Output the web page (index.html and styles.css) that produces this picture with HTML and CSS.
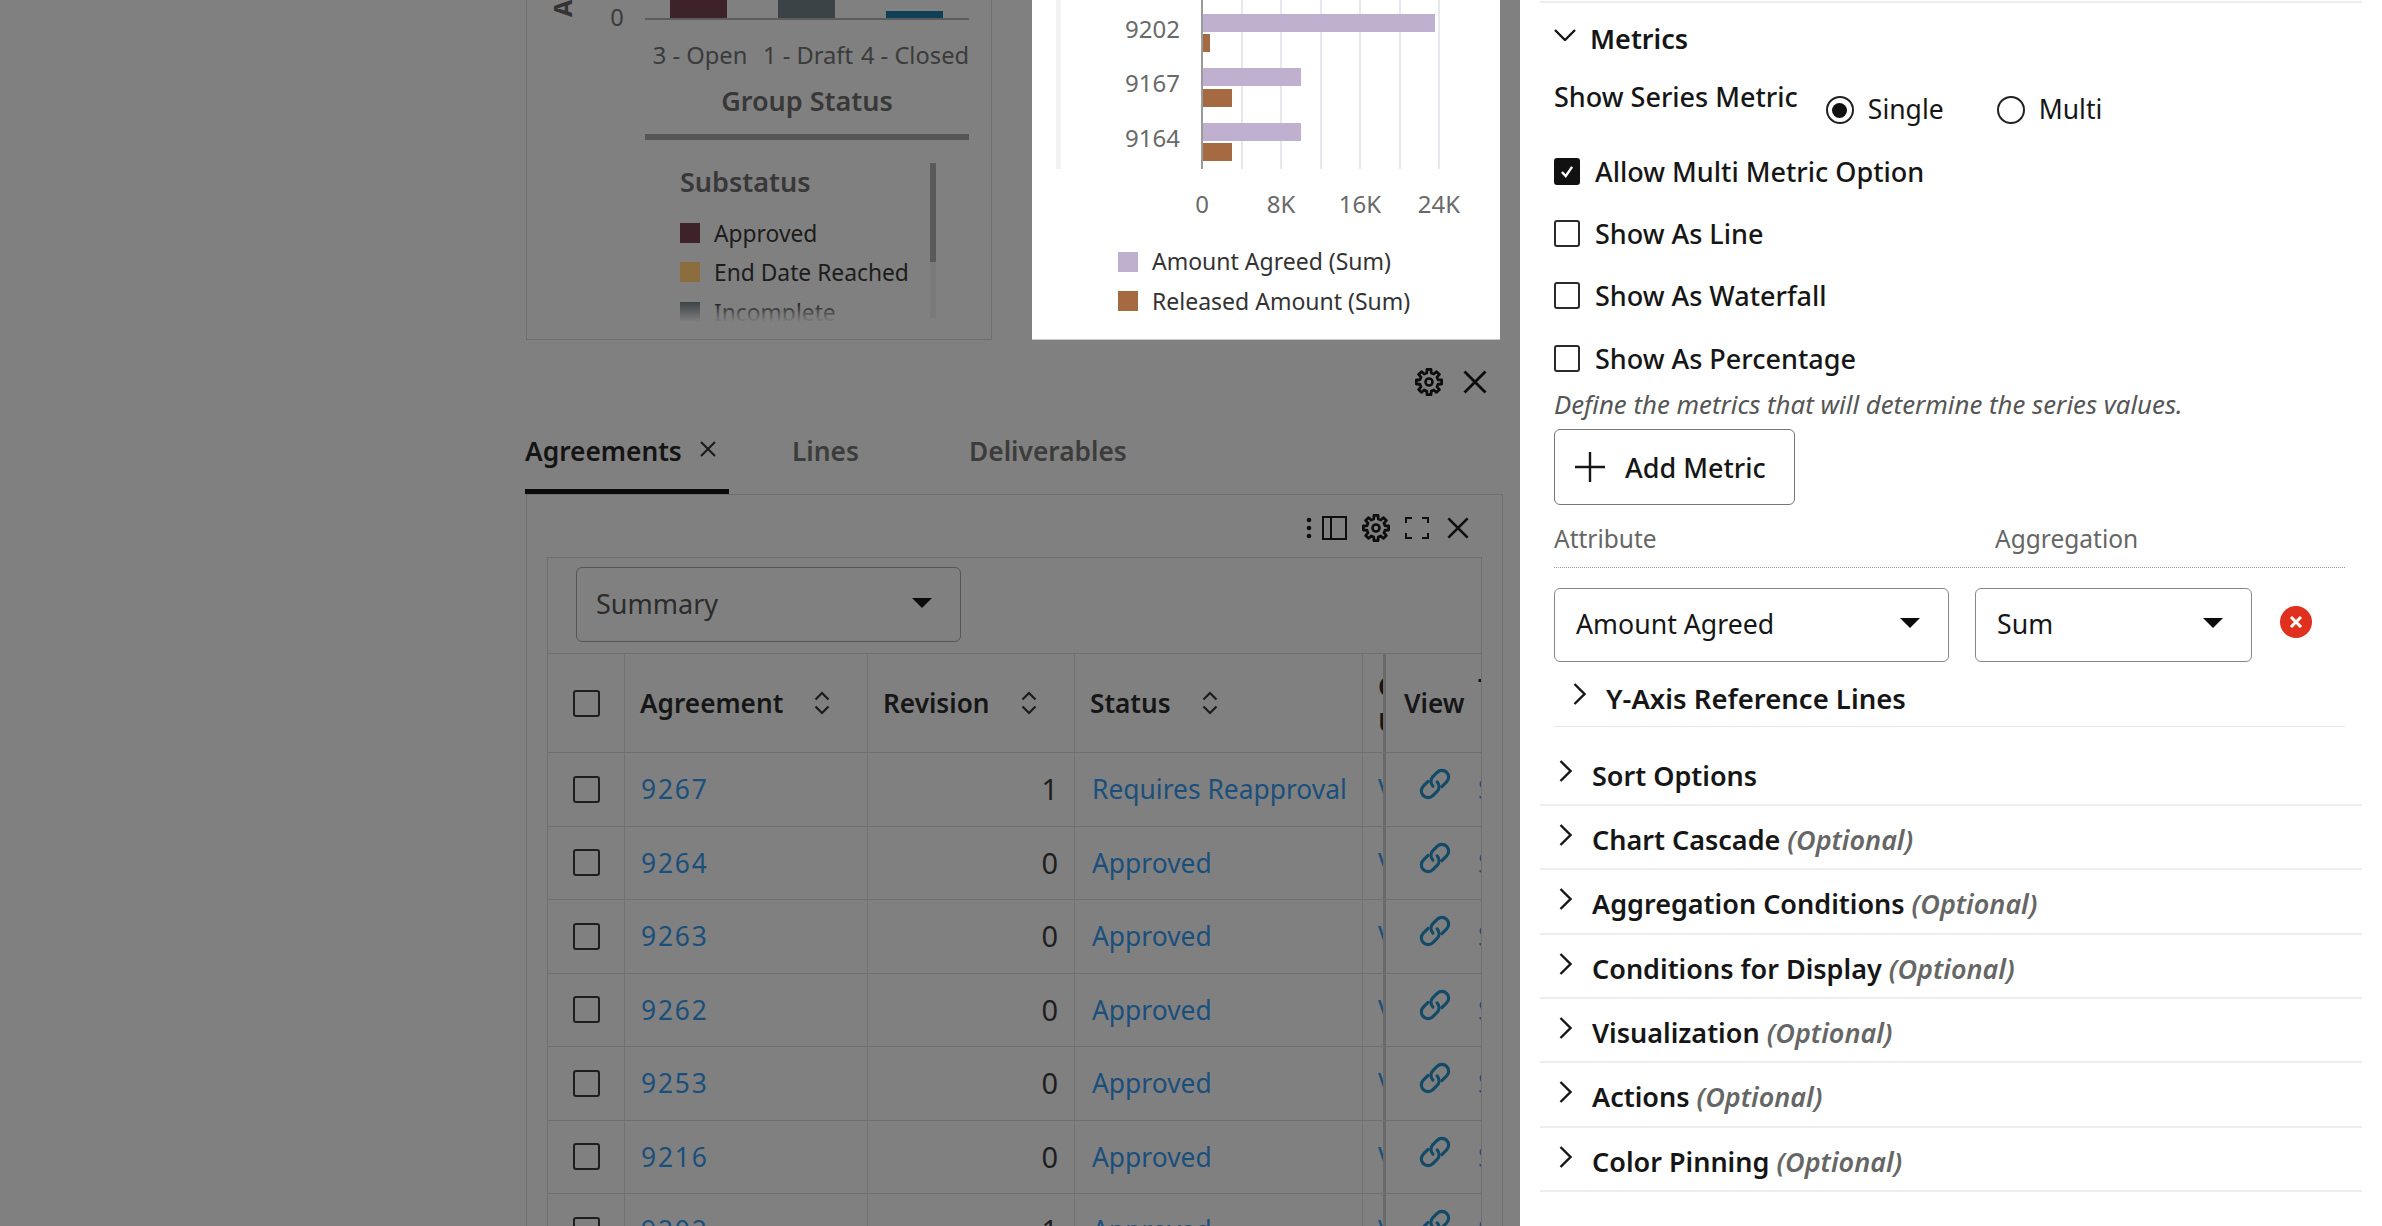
FILE: index.html
```html
<!DOCTYPE html>
<html lang="en">
<head>
<meta charset="utf-8">
<title>Chart settings</title>
<link rel="stylesheet" href="styles.css">
</head>
<body>
<svg class="defs" width="0" height="0" aria-hidden="true">
  <defs>
    <symbol id="gear" viewBox="0 0 24 24"><path fill="none" stroke="currentColor" stroke-width="2.400" stroke-linejoin="round" d="M10.060 4.240L10.280 1.140H13.720L13.940 4.240L16.120 5.140L18.470 3.100L20.900 5.530L18.860 7.880L19.760 10.060L22.860 10.280V13.720L19.760 13.940L18.860 16.120L20.900 18.470L18.470 20.900L16.120 18.860L13.940 19.760L13.720 22.860H10.280L10.060 19.760L7.880 18.860L5.530 20.900L3.100 18.470L5.140 16.120L4.240 13.940L1.140 13.720V10.280L4.240 10.060L5.140 7.880L3.100 5.530L5.530 3.100L7.880 5.140Z"/><circle cx="12" cy="12" r="3" fill="none" stroke="currentColor" stroke-width="2.200"/></symbol>
    <symbol id="close" viewBox="0 0 24 24"><path fill="none" stroke="currentColor" stroke-width="2.800" d="M1.500 1.500L22.500 22.500M22.500 1.500L1.500 22.500"/></symbol>
    <symbol id="sort" viewBox="0 0 16 24"><path fill="none" stroke="currentColor" stroke-width="2.200" d="M1.500 8.500L8 2L14.500 8.500M1.500 15.500L8 22L14.500 15.500"/></symbol>
    <symbol id="link" viewBox="0 0 24 24"><g transform="rotate(-45 12 12)" fill="none" stroke="currentColor" stroke-width="2.100" stroke-linecap="round"><path d="M10 7.500H5.500a4.500 4.500 0 0 0 0 9H9.500a4.500 4.500 0 0 0 4.500-4.500"/><path d="M14 16.500h4.500a4.500 4.500 0 0 0 0-9H14.500a4.500 4.500 0 0 0-4.500 4.500"/></g></symbol>
    <symbol id="right" viewBox="0 0 13 22"><path fill="none" stroke="currentColor" stroke-width="2.400" d="M1.500 1L11.500 11L1.500 21"/></symbol>
    <linearGradient id="fadeDark" gradientUnits="userSpaceOnUse" x1="0" y1="302" x2="0" y2="322"><stop offset="0" stop-color="#3c4347"/><stop offset="1" stop-color="#3c4347" stop-opacity="0"/></linearGradient>
    <linearGradient id="fadeText" gradientUnits="userSpaceOnUse" x1="0" y1="302" x2="0" y2="322"><stop offset="0" stop-color="#1c1c1c"/><stop offset="1" stop-color="#1c1c1c" stop-opacity="0"/></linearGradient>
  </defs>
</svg>
<div class="page">
  <main class="main">
    <section class="charts">
      <div class="chart-card">
        <svg class="chart" viewBox="526 0 466 339" role="img" aria-label="Group status chart">
          <text class="axis-title" transform="translate(572 17) rotate(-90)">Amount</text>
          <text class="tick" x="617" y="26" text-anchor="middle">0</text>
          <rect x="670" y="-4" width="57" height="22" fill="#3d2329"/>
          <rect x="778" y="-4" width="57" height="22" fill="#3c4347"/>
          <rect x="886" y="11" width="57" height="7" fill="#123f58"/>
          <rect x="645" y="18" width="324" height="2" fill="#5c5c5c"/>
          <text class="tick" x="700" y="64" text-anchor="middle">3 - Open</text>
          <text class="tick" x="808" y="64" text-anchor="middle">1 - Draft</text>
          <text class="tick" x="915" y="64" text-anchor="middle">4 - Closed</text>
          <text class="chart-head" x="807" y="111" text-anchor="middle">Group Status</text>
          <rect x="645" y="134" width="324" height="6" fill="#565656"/>
          <text class="chart-head" x="680" y="192">Substatus</text>
          <rect x="930" y="163" width="6" height="99" fill="#5a5a5a"/>
          <rect x="930" y="262" width="6" height="56" fill="#7a7a7a"/>
          <rect x="680" y="223" width="20" height="20" fill="#3d2329"/>
          <text class="legend" x="714" y="242">Approved</text>
          <rect x="680" y="262" width="20" height="20" fill="#8c6d3f"/>
          <text class="legend" x="714" y="281">End Date Reached</text>
          <rect x="680" y="302" width="20" height="20" fill="url(#fadeDark)"/>
          <text class="legend legend-fade" x="714" y="321">Incomplete</text>
        </svg>
      </div>
      <div class="chart-white">
        <svg class="chart" viewBox="1032 0 468 339" role="img" aria-label="Amount agreed and released amount by agreement">
          <rect x="1056" y="0" width="5" height="169" fill="#f3f3f3"/>
          <g fill="#e7e8ef">
            <rect x="1241" y="0" width="2" height="169"/><rect x="1280" y="0" width="2" height="169"/><rect x="1320" y="0" width="2" height="169"/><rect x="1359" y="0" width="2" height="169"/><rect x="1399" y="0" width="2" height="169"/><rect x="1438" y="0" width="2" height="169"/>
          </g>
          <rect x="1203" y="14" width="232" height="18" fill="#bfb0d0"/>
          <rect x="1203" y="34" width="7" height="18" fill="#a56a42"/>
          <rect x="1203" y="68" width="98" height="18" fill="#bfb0d0"/>
          <rect x="1203" y="89" width="29" height="18" fill="#a56a42"/>
          <rect x="1203" y="123" width="98" height="18" fill="#bfb0d0"/>
          <rect x="1203" y="143" width="29" height="18" fill="#a56a42"/>
          <rect x="1201" y="0" width="2" height="169" fill="#9a9a9a"/>
          <text class="tick2" x="1180" y="38" text-anchor="end">9202</text>
          <text class="tick2" x="1180" y="92" text-anchor="end">9167</text>
          <text class="tick2" x="1180" y="147" text-anchor="end">9164</text>
          <text class="tick2" x="1202" y="213" text-anchor="middle">0</text>
          <text class="tick2" x="1281" y="213" text-anchor="middle">8K</text>
          <text class="tick2" x="1360" y="213" text-anchor="middle">16K</text>
          <text class="tick2" x="1439" y="213" text-anchor="middle">24K</text>
          <rect x="1118" y="252" width="20" height="20" fill="#bfb0d0"/>
          <text class="legend2" x="1152" y="270">Amount Agreed (Sum)</text>
          <rect x="1118" y="291" width="20" height="20" fill="#a56a42"/>
          <text class="legend2" x="1152" y="310">Released Amount (Sum)</text>
        </svg>
      </div>
    </section>
    <div class="grid-actions">
      <svg class="ic-gear"><use href="#gear"/></svg>
      <svg class="ic-close"><use href="#close"/></svg>
    </div>
    <nav class="tabs">
      <div class="tab active">Agreements<svg class="tab-x"><use href="#close"/></svg></div>
      <div class="tab tab-lines">Lines</div>
      <div class="tab tab-deliv">Deliverables</div>
    </nav>
    <section class="panel">
      <div class="toolbar">
        <svg class="tb-dots" viewBox="0 0 6 22"><circle cx="3" cy="3" r="2.300"/><circle cx="3" cy="11" r="2.300"/><circle cx="3" cy="19" r="2.300"/></svg>
        <svg class="tb-split" viewBox="0 0 25 24"><path fill="none" stroke="currentColor" stroke-width="2" d="M1 1H24V23H1ZM9 1V23"/></svg>
        <svg class="ic-gear"><use href="#gear"/></svg>
        <svg class="tb-expand" viewBox="0 0 24 22"><path fill="none" stroke="currentColor" stroke-width="2" d="M1 6V1H7M17 1H23V6M23 16V21H17M7 21H1V16"/></svg>
        <svg class="ic-close"><use href="#close"/></svg>
      </div>
      <div class="box">
        <div class="select-row"><div class="select select-summary"><span>Summary</span><i class="caret"></i></div></div>
        <div class="tr thead">
          <div class="td c-check"><i class="cb"></i></div>
          <div class="td c-agr">Agreement<svg class="sort"><use href="#sort"/></svg></div>
          <div class="td c-rev">Revision<svg class="sort"><use href="#sort"/></svg></div>
          <div class="td c-status">Status<svg class="sort"><use href="#sort"/></svg></div>
          <div class="td c-cut">C<br>U</div>
          <div class="td c-view">View</div>
          <div class="td c-edge"><span class="edge-head">T</span></div>
        </div>
        <div class="tr"><div class="td c-check"><i class="cb"></i></div><div class="td c-agr lnk">9267</div><div class="td c-rev num">1</div><div class="td c-status lnk">Requires Reapproval</div><div class="td c-cut lnk">V</div><div class="td c-view"><svg class="link"><use href="#link"/></svg></div><div class="td c-edge lnk">S</div></div>
        <div class="tr"><div class="td c-check"><i class="cb"></i></div><div class="td c-agr lnk">9264</div><div class="td c-rev num">0</div><div class="td c-status lnk">Approved</div><div class="td c-cut lnk">V</div><div class="td c-view"><svg class="link"><use href="#link"/></svg></div><div class="td c-edge lnk">S</div></div>
        <div class="tr"><div class="td c-check"><i class="cb"></i></div><div class="td c-agr lnk">9263</div><div class="td c-rev num">0</div><div class="td c-status lnk">Approved</div><div class="td c-cut lnk">V</div><div class="td c-view"><svg class="link"><use href="#link"/></svg></div><div class="td c-edge lnk">S</div></div>
        <div class="tr"><div class="td c-check"><i class="cb"></i></div><div class="td c-agr lnk">9262</div><div class="td c-rev num">0</div><div class="td c-status lnk">Approved</div><div class="td c-cut lnk">V</div><div class="td c-view"><svg class="link"><use href="#link"/></svg></div><div class="td c-edge lnk">S</div></div>
        <div class="tr"><div class="td c-check"><i class="cb"></i></div><div class="td c-agr lnk">9253</div><div class="td c-rev num">0</div><div class="td c-status lnk">Approved</div><div class="td c-cut lnk">V</div><div class="td c-view"><svg class="link"><use href="#link"/></svg></div><div class="td c-edge lnk">S</div></div>
        <div class="tr"><div class="td c-check"><i class="cb"></i></div><div class="td c-agr lnk">9216</div><div class="td c-rev num">0</div><div class="td c-status lnk">Approved</div><div class="td c-cut lnk">V</div><div class="td c-view"><svg class="link"><use href="#link"/></svg></div><div class="td c-edge lnk">S</div></div>
        <div class="tr"><div class="td c-check"><i class="cb"></i></div><div class="td c-agr lnk">9202</div><div class="td c-rev num">1</div><div class="td c-status lnk">Approved</div><div class="td c-cut lnk">V</div><div class="td c-view"><svg class="link"><use href="#link"/></svg></div><div class="td c-edge lnk">S</div></div>
      </div>
    </section>
  </main>
  <aside class="side">
    <div class="acc-open">
      <div class="acc-head metrics-head">
        <svg class="chev-down" viewBox="0 0 22 12"><path fill="none" stroke="currentColor" stroke-width="2.400" d="M1 1L11 11L21 1"/></svg>
        <span class="acc-title">Metrics</span>
      </div>
      <div class="body">
        <div class="series-row">
          <span class="series-label">Show Series Metric</span>
          <div class="radios">
            <span class="radio on"><i class="dot"></i></span><span class="radio-text r-single">Single</span>
            <span class="radio"></span><span class="radio-text">Multi</span>
          </div>
        </div>
        <div class="check-row"><span class="box-check on"><svg viewBox="0 0 26 27"><path fill="none" stroke="#fff" stroke-width="2.800" d="M7 14L11.500 19L19 8"/></svg></span>Allow Multi Metric Option</div>
        <div class="check-row"><span class="box-check"></span>Show As Line</div>
        <div class="check-row"><span class="box-check"></span>Show As Waterfall</div>
        <div class="check-row"><span class="box-check"></span>Show As Percentage</div>
        <p class="hint">Define the metrics that will determine the series values.</p>
        <button class="add-btn" type="button"><svg viewBox="0 0 30 30"><path fill="none" stroke="currentColor" stroke-width="2.400" d="M15 0V30M0 15H30"/></svg>Add Metric</button>
        <div class="col-heads"><span class="col-attr">Attribute</span><span>Aggregation</span></div>
        <div class="metric-row">
          <div class="select select-attr"><span>Amount Agreed</span><i class="caret"></i></div>
          <div class="select select-agg"><span>Sum</span><i class="caret"></i></div>
          <svg class="remove" viewBox="0 0 32 32"><circle cx="16" cy="16" r="16" fill="#e0301e"/><path fill="none" stroke="#fff" stroke-width="3" d="M11 11L21 21M21 11L11 21"/></svg>
        </div>
        <div class="acc-head yaxis">
          <svg class="chev"><use href="#right"/></svg>
          <span class="acc-title">Y-Axis Reference Lines</span>
        </div>
      </div>
    </div>
    <div class="acc-head acc-item acc-sort"><svg class="chev"><use href="#right"/></svg><span class="acc-title">Sort Options</span></div>
    <div class="acc-head acc-item"><svg class="chev"><use href="#right"/></svg><span class="acc-title">Chart Cascade <em>(Optional)</em></span></div>
    <div class="acc-head acc-item"><svg class="chev"><use href="#right"/></svg><span class="acc-title">Aggregation Conditions <em>(Optional)</em></span></div>
    <div class="acc-head acc-item"><svg class="chev"><use href="#right"/></svg><span class="acc-title">Conditions for Display <em>(Optional)</em></span></div>
    <div class="acc-head acc-item"><svg class="chev"><use href="#right"/></svg><span class="acc-title">Visualization <em>(Optional)</em></span></div>
    <div class="acc-head acc-item"><svg class="chev"><use href="#right"/></svg><span class="acc-title">Actions <em>(Optional)</em></span></div>
    <div class="acc-head acc-item"><svg class="chev"><use href="#right"/></svg><span class="acc-title">Color Pinning <em>(Optional)</em></span></div>
  </aside>
</div>
</body>
</html>
```

FILE: styles.css
```css
* { box-sizing: border-box; }
html, body { margin: 0; height: 100%; overflow: hidden; }
body { font-family: "Noto Sans", "Open Sans", sans-serif; font-size: 27px; color: #1a1a1a; background: #808080; }
.defs { display: block; height: 0; }
.page { display: flex; width: 2382px; height: 1226px; overflow: hidden; background: #808080; }

/* left, dimmed part */
.main { width: 1520px; flex: none; padding: 0 17px 0 525px; display: flex; flex-direction: column; }
.charts { display: flex; height: 340px; flex: none; gap: 40px; padding-left: 1px; }
.chart-card { width: 466px; height: 340px; border: 1.500px solid #6f6f6f; border-top: 0; overflow: hidden; }
.chart-white { width: 468px; height: 340px; background: #fff; border-bottom: 1px solid #c8c8c8; overflow: hidden; }
.chart { display: block; width: 100%; height: 339px; }
.chart-card .chart { width: 466px; margin-left: -1.500px; }
.chart text { font-family: "Noto Sans", "Open Sans", sans-serif; }
.axis-title { font-size: 25px; font-weight: 700; fill: #333; }
.tick { font-size: 23.700px; fill: #3b3b3b; }
.tick2 { font-size: 24px; fill: #6a6a6a; }
.chart-head { font-size: 27px; font-weight: 600; fill: #383838; }
.legend { font-size: 22.800px; fill: #1c1c1c; }
.legend-fade { fill: url(#fadeText); }
.legend2 { font-size: 23px; fill: #333; }

.grid-actions { height: 85px; flex: none; display: flex; justify-content: flex-end; align-items: center; gap: 20px; padding: 0 16px 2px 0; color: #0c0c0c; }
.ic-gear { width: 28px; height: 28px; flex: none; }
.ic-close { width: 24px; height: 24px; flex: none; }

.tabs { height: 69px; flex: none; display: flex; align-items: flex-start; font-weight: 600; font-size: 26.300px; color: #3c3c3c; padding-top: 7px; }
.tab { height: 62px; line-height: 38px; }
.tab.active { width: 204px; flex: none; color: #141414; display: flex; align-items: flex-start; gap: 18px; border-bottom: 5px solid #0a0a0a; margin-right: 63px; }
.tab-x { width: 16px; height: 16px; margin-top: 9px; color: #181818; }
.tab-lines { width: 177px; flex: none; }

.panel { flex: 1; border: 1px solid #6f6f6f; border-bottom: 0; padding: 0 20px; min-height: 0; overflow: hidden; margin-left: 1px; }
.toolbar { height: 62px; display: flex; align-items: center; justify-content: flex-end; color: #0e0e0e; padding: 4px 13px 0 0; }
.toolbar .ic-close { width: 22px; height: 22px; }
.tb-dots { width: 6px; height: 22px; fill: currentColor; margin-right: 10px; }
.tb-split { width: 25px; height: 24px; margin-right: 15px; }
.toolbar .ic-gear { margin-right: 15px; }
.tb-expand { width: 24px; height: 22px; margin-right: 18px; }
.box { border: 1px solid #6f6f6f; border-bottom: 0; font-size: 26.400px; }
.select-row { padding: 9px 0 11px 28px; }
.select { display: flex; align-items: center; justify-content: space-between; border: 1.500px solid #555; border-radius: 6px; }
.select > span { margin-top: -3px; }
.select-summary { width: 385px; height: 75px; padding: 0 28px 0 19px; color: #2c2c2c; font-size: 27px; }
.caret { width: 0; height: 0; border-left: 10px solid transparent; border-right: 10px solid transparent; border-top: 10px solid #0c0c0c; margin-top: -4px; }

.tr { display: grid; grid-template-columns: 77px 243px 207px 288px 23px 92px 3px; height: 73.500px; border-bottom: 1px solid #6f6f6f; }
.thead { height: 100px; border-top: 1px solid #6f6f6f; font-weight: 600; color: #161616; font-size: 26.200px; }
.td { display: flex; align-items: center; overflow: hidden; border-right: 1px solid #727272; white-space: nowrap; padding: 0 16px; line-height: 36px; }
.thead .c-agr, .thead .c-rev, .thead .c-status { padding-left: 15px; }
.c-check { padding: 0 0 0 25px; }
.cb { display: block; width: 27px; height: 27px; border: 2.500px solid #1e1e1e; border-radius: 3px; flex: none; }
.sort { width: 16px; height: 24px; margin-left: 31px; color: #1c1c1c; flex: none; }
.lnk { color: #1a4f7c; }
.c-agr.lnk { letter-spacing: 1.800px; }
.num { justify-content: flex-end; color: #1e1e1e; font-size: 29px; }
.c-status { padding-left: 17px; }
.c-cut { padding: 0 0 0 15px; border-right: 3px solid #6a6a6a; display: block; }
.thead .c-cut { padding-top: 14px; }
.tr:not(.thead) .c-cut { padding-top: 18px; }
.c-view { justify-content: center; border-right: 0; padding: 0 0 10px 6px; }
.thead .c-view { justify-content: flex-start; padding: 0 0 0 18px; }
.c-edge { padding: 0; border-right: 0; }
.edge-head { margin-top: -30px; }
.link { width: 36px; height: 36px; color: #134a68; flex: none; }

/* right settings panel */
.side { width: 862px; flex: none; height: 1226px; background: #fff; padding: 1px 20px 0; color: #161616; overflow: hidden; font-weight: 500; }
.acc-open { border-top: 2px solid #eee; }
.acc-head { display: flex; align-items: flex-start; }
.acc-title { font-weight: 600; line-height: 36px; font-size: 27px; white-space: nowrap; }
.acc-title em { font-style: italic; color: #666; }
.metrics-head { height: 74px; padding: 18px 0 0 14px; gap: 14px; }
.chev-down { width: 22px; height: 12px; margin-top: 8px; flex: none; }
.body { padding: 0 17px 0 14px; }
.series-row { height: 63px; display: flex; align-items: flex-start; gap: 28px; }
.series-label { line-height: 36px; margin-top: 2px; white-space: nowrap; }
.radios { display: flex; align-items: center; margin-top: 14px; height: 36px; font-size: 26.500px; }
.radio { width: 28px; height: 28px; border: 2px solid #222; border-radius: 50%; flex: none; display: flex; align-items: center; justify-content: center; margin-right: 14px; margin-top: 2px; }
.dot { display: block; width: 15px; height: 15px; border-radius: 50%; background: #111; }
.radio-text { margin-right: 53px; font-weight: 400; }
.check-row { height: 62.300px; display: flex; align-items: center; gap: 15px; white-space: nowrap; }
.box-check { width: 26px; height: 27px; border: 2px solid #2a2a2a; border-radius: 3px; flex: none; display: block; }
.box-check.on { background: #111; border-color: #111; }
.box-check svg { display: block; width: 22px; height: 23px; }
.hint { margin: 0; height: 30px; line-height: 30px; font-style: italic; color: #555; font-size: 25.800px; font-weight: 400; white-space: nowrap; }
.add-btn { display: flex; align-items: center; gap: 20px; width: 241px; height: 76px; margin-top: 10px; padding: 0 0 0 20px; background: #fff; border: 1.500px solid #777; border-radius: 6px; font: inherit; font-weight: 500; color: #161616; }
.add-btn svg { width: 30px; height: 30px; flex: none; }
.col-heads { height: 63px; display: flex; padding-top: 17px; line-height: 34px; color: #666; font-weight: 400; font-size: 24.500px; border-bottom: 1px dotted #999; }
.col-attr { width: 441px; flex: none; }
.metric-row { display: flex; align-items: flex-start; margin-top: 20px; font-weight: 400; font-size: 26.700px; }
.select-attr { width: 395px; height: 74px; padding: 0 28px 0 21px; margin-right: 26px; border-color: #888; }
.select-agg { width: 277px; height: 74px; padding: 0 28px 0 21px; margin-right: 28px; border-color: #888; }
.remove { width: 32px; height: 32px; margin-top: 18px; flex: none; }
.yaxis { height: 65px; padding: 19px 0 0 19px; gap: 20px; border-bottom: 1px solid #e6e6e6; margin: 0; }
.yaxis .acc-title { font-size: 27.500px; }
.chev { width: 13px; height: 22px; flex: none; margin-top: 2px; }
.acc-item { height: 64.300px; padding: 16px 0 0 19px; gap: 20px; border-bottom: 2px solid #eee; }
.acc-sort { height: 79px; padding-top: 31px; }
```
